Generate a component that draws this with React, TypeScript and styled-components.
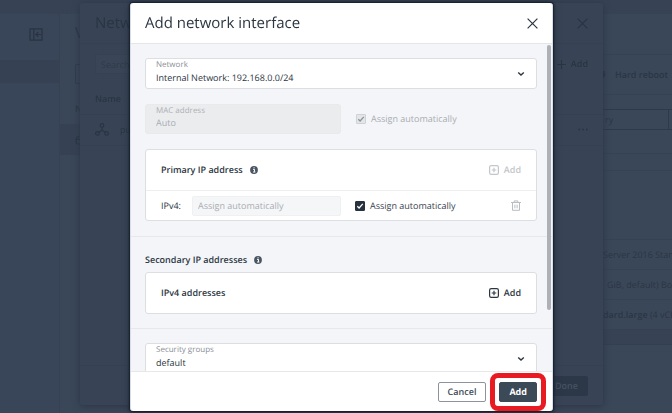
import React from "react";
import styled, { createGlobalStyle } from "styled-components";

const GlobalStyle = createGlobalStyle`
  *, *::before, *::after { box-sizing: border-box; }
  body {
    margin: 0;
    background: #3a4759;
    color: #2b3644;
    font-family: "Open Sans", "Noto Sans", sans-serif;
    font-size: 9px;
    line-height: 12px;
    text-rendering: geometricPrecision;
  }
  button, input, select { font: inherit; color: inherit; margin: 0; text-rendering: inherit; }
  h1, h2, h3, p { margin: 0; }
`;

/* ---------- page under the overlays ---------- */

const Page = styled.div`
  display: flex;
  flex-direction: column;
  height: 100vh;
  overflow: hidden;
  color: #2b3644;
`;

const TopBar = styled.header`
  flex: none;
  height: 14px;
  background: #374355;
`;

const Columns = styled.div`
  flex: 1;
  display: flex;
  min-height: 0;
`;

const Sidebar = styled.nav`
  flex: none;
  display: flex;
  flex-direction: column;
  width: 60px;
  background: #39465a;
  border-right: 1px solid #364253;
`;

const SidebarTop = styled.div`
  display: flex;
  align-items: flex-start;
  justify-content: flex-end;
  padding: 14px 16px 0 0;
  height: 46px;
`;

const SidebarItem = styled.div`
  height: 23px;
  background: #364253;
`;

const IconButton = styled.button<{ $color?: string }>`
  display: flex;
  align-items: center;
  justify-content: center;
  flex: none;
  padding: 0;
  border: 0;
  background: none;
  color: ${(p) => p.$color ?? "inherit"};
`;

const ListPane = styled.section`
  flex: 1;
  min-width: 0;
  display: flex;
  flex-direction: column;
`;

const ListTitle = styled.h1`
  padding: 9px 15px 0;
  height: 50px;
  font-size: 15px;
  line-height: 20px;
  font-weight: 400;
`;

const ListSearch = styled.input`
  width: 120px;
  height: 20px;
  margin-left: 15px;
  padding: 0 8px;
  border: 1px solid #303b4b;
  border-radius: 2px;
  background: none;
`;

const ListHead = styled.div`
  height: 40px;
  padding: 19px 15px 0;
  font-weight: 600;
`;

const ListRow = styled.div`
  display: flex;
  align-items: center;
  height: 31px;
  padding: 0 15px;
  background: #364253;
`;

const DetailPane = styled.section`
  flex: none;
  display: flex;
  flex-direction: column;
  width: 69px;
  overflow: hidden;
  white-space: nowrap;
`;

const DetailSpacer = styled.div<{ $height: number }>`
  flex: none;
  height: ${(p) => p.$height}px;
  border-bottom: 1px solid #364254;
`;

const Toolbar = styled.div`
  display: flex;
  align-items: center;
  gap: 9px;
  height: 40px;
  border-bottom: 1px solid #364254;
  font-weight: 600;
`;

const DetailTabs = styled.div`
  display: flex;
  height: 21px;
  margin-top: 14px;
  border: 1px solid #2e3949;
  border-width: 1px 0;
`;

const DetailTab = styled.div`
  display: flex;
  align-items: center;
  width: 66px;
  padding-left: 2px;
  border-right: 1px solid #2e3949;
`;

const DetailRow = styled.div<{ $indent?: boolean }>`
  display: flex;
  align-items: center;
  height: 30px;
  padding-left: ${(p) => (p.$indent ? 4 : 0)}px;
  border-bottom: 1px solid #364254;
`;

const Flavor = styled.span`
  font-weight: 600;
`;

const DetailBand = styled.div`
  height: 15px;
  background: #374355;
  border-bottom: 1px solid #344050;
`;

/* ---------- overlays ---------- */

const Overlay = styled.div<{ $bottom: number }>`
  position: fixed;
  inset: 0;
  display: flex;
  justify-content: center;
  padding: 3px 0 ${(p) => p.$bottom}px 11px;
`;

const Drawer = styled.aside`
  display: flex;
  flex-direction: column;
  width: 100%;
  max-width: 523px;
  background: #384455;
  border-radius: 2px;
  box-shadow: 0 1px 7px #2a3545;
  color: #2a3442;
`;

const DrawerHeader = styled.header`
  display: flex;
  align-items: center;
  justify-content: space-between;
  height: 41px;
  padding: 0 15px;
  border-bottom: 1px solid #354152;
`;

const Title = styled.h2`
  font-size: 15px;
  line-height: 22px;
  font-weight: 400;
`;

const DrawerTools = styled.div`
  display: flex;
  align-items: center;
  justify-content: space-between;
  height: 40px;
  padding: 0 15px;
`;

const DrawerSearch = styled.input`
  width: 120px;
  height: 20px;
  padding: 0 5px;
  border: 1px solid #364253;
  border-radius: 2px;
  background: #3a4657;
  &::placeholder { color: #2f3a49; opacity: 1; }
`;

const TextAction = styled.button<{ $muted?: boolean }>`
  display: flex;
  align-items: center;
  gap: 5px;
  padding: 0;
  border: 0;
  background: none;
  font-weight: 600;
  color: ${(p) => (p.$muted ? "#c3c6ca" : "inherit")};
`;

const DrawerTable = styled.table`
  width: 100%;
  border-collapse: collapse;
  text-align: left;
  th { height: 30px; padding: 0 15px; font-weight: 600; }
  td { height: 31px; padding: 0 15px; border: solid #354152; border-width: 1px 0; }
`;

const NameCell = styled.div`
  display: flex;
  align-items: center;
  gap: 11px;
`;

const DrawerFooter = styled.footer`
  display: flex;
  align-items: center;
  justify-content: flex-end;
  height: 40px;
  margin-top: auto;
  padding: 0 15px;
  border-top: 1px solid #354152;
`;

const DoneButton = styled.button`
  height: 20px;
  padding: 0 10px;
  border: 0;
  border-radius: 2px;
  background: #2c3848;
  color: #465261;
  font-weight: 600;
`;

/* ---------- dialog ---------- */

const Dialog = styled.div`
  display: flex;
  flex-direction: column;
  width: 100%;
  max-width: 423px;
  background: #fff;
  border: 1px solid #d9dce6;
  border-width: 0 1px;
  border-radius: 3px;
  box-shadow: 0 0 2px 1px #141e2b, 0 2px 8px #222d3c;
  color: #2b3642;
`;

const DialogHeader = styled.header`
  flex: none;
  display: flex;
  align-items: center;
  justify-content: space-between;
  height: 41px;
  padding: 0 14px;
  border-bottom: 1px solid #e3e5e8;
`;

const Viewport = styled.div`
  position: relative;
  flex: 1;
  min-height: 0;
  overflow: hidden;
  background: #f4f5f8;
`;

const ScrollThumb = styled.div`
  position: absolute;
  top: 1px;
  right: 1px;
  width: 4px;
  height: 81%;
  border-radius: 2px;
  background: #adb0b4;
`;

const Section = styled.section`
  display: flex;
  flex-direction: column;
  gap: 15px;
  padding: 14px 15px 15px 14px;
  border-bottom: 1px solid #e6e8ea;
`;

const Field = styled.div<{ $disabled?: boolean }>`
  position: relative;
  display: flex;
  height: ${(p) => (p.$disabled ? 30 : 31)}px;
  border: 1px solid ${(p) => (p.$disabled ? "#e9eaec" : "#dcdee1")};
  border-radius: 3px;
  background: ${(p) => (p.$disabled ? "#ebecee" : "#fff")};
  color: ${(p) => (p.$disabled ? "#a9adb2" : "#2b3642")};
`;

const FieldLabel = styled.label<{ $disabled?: boolean }>`
  position: absolute;
  top: 1px;
  left: 10px;
  font-size: 8px;
  line-height: 10px;
  color: ${(p) => (p.$disabled ? "#adb0b5" : "#8b9097")};
`;

const FieldSelect = styled.select`
  width: 100%;
  appearance: none;
  padding: 10px 30px 2px 10px;
  border: 0;
  border-radius: 3px;
  background: none;
`;

const FieldInput = styled.input`
  width: 100%;
  padding: 9px 10px 2px;
  border: 0;
  background: none;
`;

const FieldArrow = styled.span`
  position: absolute;
  top: 0;
  bottom: 0;
  right: 11px;
  display: flex;
  align-items: center;
  pointer-events: none;
`;

const SplitRow = styled.div`
  display: grid;
  grid-template-columns: 13fr 12fr;
  gap: 15px;
  align-items: center;
`;

const CheckLabel = styled.label<{ $muted?: boolean }>`
  display: flex;
  align-items: center;
  gap: 5px;
  color: ${(p) => (p.$muted ? "#a9adb2" : "#3a4551")};
`;

const CheckBox = styled.input<{ $muted?: boolean }>`
  flex: none;
  appearance: none;
  width: 10px;
  height: 10px;
  border: 1px solid ${(p) => (p.$muted ? "#cfd2d5" : "#27323f")};
  border-radius: 1px;
  background: ${(p) => (p.$muted ? "#e3e5e7" : "#27323f")}
    url("data:image/svg+xml,%3Csvg xmlns='http://www.w3.org/2000/svg' viewBox='0 0 8 8'%3E%3Cpath d='M1.3 4.2 3.1 6 6.8 1.9' fill='none' stroke='${(p) =>
      p.$muted ? "%238d9298" : "white"}' stroke-width='1.3'/%3E%3C/svg%3E")
    center / 8px 8px no-repeat;
`;

const Card = styled.div`
  border: 1px solid #dcdee1;
  border-radius: 3px;
  background: #fff;
`;

const CardHead = styled.div`
  display: flex;
  align-items: center;
  justify-content: space-between;
  height: 40px;
  padding: 0 15px;
`;

const Heading = styled.h3`
  display: flex;
  align-items: center;
  gap: 7px;
  font-size: 9px;
  line-height: 12px;
  font-weight: 600;
`;

const AddressRow = styled.div`
  display: flex;
  align-items: center;
  height: 30px;
  padding: 0 15px;
  border-top: 1px solid #eceef0;
`;

const AddressLabel = styled.label`
  flex: none;
  width: 31px;
`;

const AddressInput = styled.input`
  flex: 1;
  min-width: 0;
  max-width: 149px;
  height: 20px;
  margin-right: 14px;
  padding: 0 5px;
  border: 1px solid #eff0f2;
  border-radius: 2px;
  background: #f5f6f7;
  &::placeholder { color: #aaaeb3; opacity: 1; }
`;

const Push = styled.span`
  display: flex;
  margin-left: auto;
`;

const RowActions = styled.div`
  display: flex;
  justify-content: flex-end;
`;

const SecondarySection = styled(Section)`
  gap: 6px;
  padding-top: 17px;
  padding-bottom: 14px;
`;

const DialogFooter = styled.footer`
  flex: none;
  display: flex;
  align-items: center;
  justify-content: flex-end;
  gap: 13px;
  height: 40px;
  padding: 0 15px;
  border-top: 1px solid #e6e8ea;
`;

const Button = styled.button<{ $primary?: boolean }>`
  height: 20px;
  padding: 0 9px;
  border: 1px solid ${(p) => (p.$primary ? "#3c4956" : "#8d939a")};
  border-radius: 2px;
  background: ${(p) => (p.$primary ? "#3c4956" : "#fff")};
  color: ${(p) => (p.$primary ? "#fff" : "#3c4956")};
  font-weight: ${(p) => (p.$primary ? 700 : 600)};
`;

const Highlight = styled.span`
  position: relative;
  display: flex;
  &::after {
    content: "";
    position: absolute;
    inset: -9px;
    border: 5px solid #e81b23;
    border-radius: 8px;
    pointer-events: none;
  }
`;

/* ---------- icons ---------- */

const CloseIcon = () => (
  <svg width="11" height="11" viewBox="0 0 11 11" fill="none" stroke="currentColor" strokeWidth="1.2">
    <path d="M.6.6l9.8 9.8M10.4.6.6 10.4" />
  </svg>
);

const ChevronIcon = () => (
  <svg width="8" height="6" viewBox="0 0 8 6" fill="none" stroke="currentColor" strokeWidth="1.4">
    <path d="M1.2 1.6 4 4.1l2.8-2.5" />
  </svg>
);

const InfoIcon = () => (
  <svg width="8" height="8" viewBox="0 0 8 8">
    <circle cx="4" cy="4" r="3.9" fill="#4a5562" />
    <path d="M3 3.4h1.5v2.4M3 6h2.4M3.5 1.8h1.1" fill="none" stroke="#fff" strokeWidth="1" />
  </svg>
);

const PlusBoxIcon = () => (
  <svg width="10" height="10" viewBox="0 0 10 10" fill="none" stroke="currentColor" strokeWidth="1.2">
    <rect x=".6" y=".6" width="8.8" height="8.8" rx="1.6" />
    <path d="M5 2.7v4.6M2.7 5h4.6" />
  </svg>
);

const PlusIcon = () => (
  <svg width="9" height="9" viewBox="0 0 9 9" fill="none" stroke="currentColor" strokeWidth="1.2">
    <path d="M4.5 0v9M0 4.5h9" />
  </svg>
);

const TrashIcon = () => (
  <svg width="10" height="11" viewBox="0 0 10 11" fill="none" stroke="currentColor" strokeWidth="1">
    <path d="M0 2.5h10M3.2 2.3V.9h3.6v1.4M1.5 2.8v7.5h7V2.8M3.9 4.7v3.6M6.1 4.7v3.6" />
  </svg>
);

const NetworkIcon = () => (
  <svg width="14" height="13" viewBox="0 0 14 13" fill="none" stroke="currentColor" strokeWidth="1.2">
    <circle cx="7" cy="2.4" r="1.8" />
    <circle cx="2.4" cy="10.4" r="1.8" />
    <circle cx="11.6" cy="10.4" r="1.8" />
    <path d="M7 4.2V7.2L3.9 9.3M7 7.2l3.1 2.1" />
  </svg>
);

const CollapseIcon = () => (
  <svg width="14" height="13" viewBox="0 0 14 13" fill="none" stroke="currentColor" strokeWidth="1.2">
    <path d="M1 .8h12v11.4H1zM4.8.8v11.4M12 6.5H7.2M9.3 4.2 7 6.5l2.3 2.3" />
  </svg>
);

const DotsIcon = () => (
  <svg width="10" height="3" viewBox="0 0 10 3" fill="currentColor">
    <circle cx="1.2" cy="1.5" r=".9" />
    <circle cx="5" cy="1.5" r=".9" />
    <circle cx="8.8" cy="1.5" r=".9" />
  </svg>
);

const ServerIcon = () => (
  <svg width="11" height="10" viewBox="0 0 11 10" fill="none" stroke="currentColor" strokeWidth="1.2">
    <path d="M4.5 1 2.2 2.6A2 2 0 0 0 1.2 4.2v3A1.8 1.8 0 0 0 3 9h6M1.4 4.4h7" />
  </svg>
);

const BoltIcon = () => (
  <svg width="3" height="8" viewBox="0 0 3 8" fill="currentColor">
    <path d="M0 0h1.4v2.8H3L0 8z" />
  </svg>
);

/* ---------- composition ---------- */

const SelectField = ({ id, label, value }: { id: string; label: string; value: string }) => (
  <Field>
    <FieldLabel htmlFor={id}>{label}</FieldLabel>
    <FieldSelect id={id} defaultValue={value}>
      <option>{value}</option>
    </FieldSelect>
    <FieldArrow>
      <ChevronIcon />
    </FieldArrow>
  </Field>
);

const Background = () => (
  <Page>
    <TopBar />
    <Columns>
      <Sidebar>
        <SidebarTop>
          <IconButton aria-label="Collapse menu" $color="#283341">
            <CollapseIcon />
          </IconButton>
        </SidebarTop>
        <SidebarItem />
      </Sidebar>
      <ListPane>
        <ListTitle>V</ListTitle>
        <ListSearch aria-label="Search machines" />
        <ListHead>Name</ListHead>
        <ListRow>
          <ServerIcon />
        </ListRow>
      </ListPane>
      <DetailPane>
        <DetailSpacer $height={41} />
        <Toolbar>
          <BoltIcon />
          Hard reboot
        </Toolbar>
        <DetailTabs>
          <DetailTab>ry</DetailTab>
        </DetailTabs>
        <DetailSpacer $height={24} />
        <DetailSpacer $height={17} />
        <DetailSpacer $height={69} />
        <DetailRow>Server 2016 Stan</DetailRow>
        <DetailRow $indent>GiB, default) Boo</DetailRow>
        <DetailRow>
          <span>
            <Flavor>dard.large</Flavor> (4 vCP
          </span>
        </DetailRow>
        <DetailBand />
      </DetailPane>
    </Columns>
  </Page>
);

const NetworkDrawer = () => (
  <Overlay $bottom={8}>
    <Drawer>
      <DrawerHeader>
        <Title>Network interfaces</Title>
        <IconButton aria-label="Close network interfaces">
          <CloseIcon />
        </IconButton>
      </DrawerHeader>
      <DrawerTools>
        <DrawerSearch placeholder="Search" aria-label="Search interfaces" />
        <TextAction>
          <PlusIcon />
          Add
        </TextAction>
      </DrawerTools>
      <DrawerTable>
        <thead>
          <tr>
            <th>Name</th>
            <th aria-label="Actions" />
          </tr>
        </thead>
        <tbody>
          <tr>
            <td>
              <NameCell>
                <NetworkIcon />
                public
              </NameCell>
            </td>
            <td>
              <RowActions>
                <IconButton aria-label="More">
                  <DotsIcon />
                </IconButton>
              </RowActions>
            </td>
          </tr>
        </tbody>
      </DrawerTable>
      <DrawerFooter>
        <DoneButton>Done</DoneButton>
      </DrawerFooter>
    </Drawer>
  </Overlay>
);

export default function App() {
  return (
    <>
      <GlobalStyle />
      <Background />
      <NetworkDrawer />
      <Overlay $bottom={2}>
        <Dialog role="dialog" aria-labelledby="dialog-title">
          <DialogHeader>
            <Title id="dialog-title">Add network interface</Title>
            <IconButton aria-label="Close">
              <CloseIcon />
            </IconButton>
          </DialogHeader>
          <Viewport>
            <Section>
              <SelectField id="network" label="Network" value="Internal Network: 192.168.0.0/24" />
              <SplitRow>
                <Field $disabled>
                  <FieldLabel htmlFor="mac" $disabled>
                    MAC address
                  </FieldLabel>
                  <FieldInput id="mac" defaultValue="Auto" disabled />
                </Field>
                <CheckLabel $muted>
                  <CheckBox type="checkbox" $muted defaultChecked disabled />
                  Assign automatically
                </CheckLabel>
              </SplitRow>
              <Card>
                <CardHead>
                  <Heading>
                    Primary IP address
                    <InfoIcon />
                  </Heading>
                  <TextAction $muted disabled>
                    <PlusBoxIcon />
                    Add
                  </TextAction>
                </CardHead>
                <AddressRow>
                  <AddressLabel htmlFor="ipv4">IPv4:</AddressLabel>
                  <AddressInput id="ipv4" placeholder="Assign automatically" disabled />
                  <CheckLabel>
                    <CheckBox type="checkbox" defaultChecked />
                    Assign automatically
                  </CheckLabel>
                  <Push>
                    <IconButton aria-label="Delete address" $color="#b9bdc1">
                      <TrashIcon />
                    </IconButton>
                  </Push>
                </AddressRow>
              </Card>
            </Section>
            <SecondarySection>
              <Heading>
                Secondary IP addresses
                <InfoIcon />
              </Heading>
              <Card>
                <CardHead>
                  <Heading>IPv4 addresses</Heading>
                  <TextAction>
                    <PlusBoxIcon />
                    Add
                  </TextAction>
                </CardHead>
              </Card>
            </SecondarySection>
            <Section>
              <SelectField id="groups" label="Security groups" value="default" />
            </Section>
            <ScrollThumb />
          </Viewport>
          <DialogFooter>
            <Button>Cancel</Button>
            <Highlight>
              <Button $primary>Add</Button>
            </Highlight>
          </DialogFooter>
        </Dialog>
      </Overlay>
    </>
  );
}
